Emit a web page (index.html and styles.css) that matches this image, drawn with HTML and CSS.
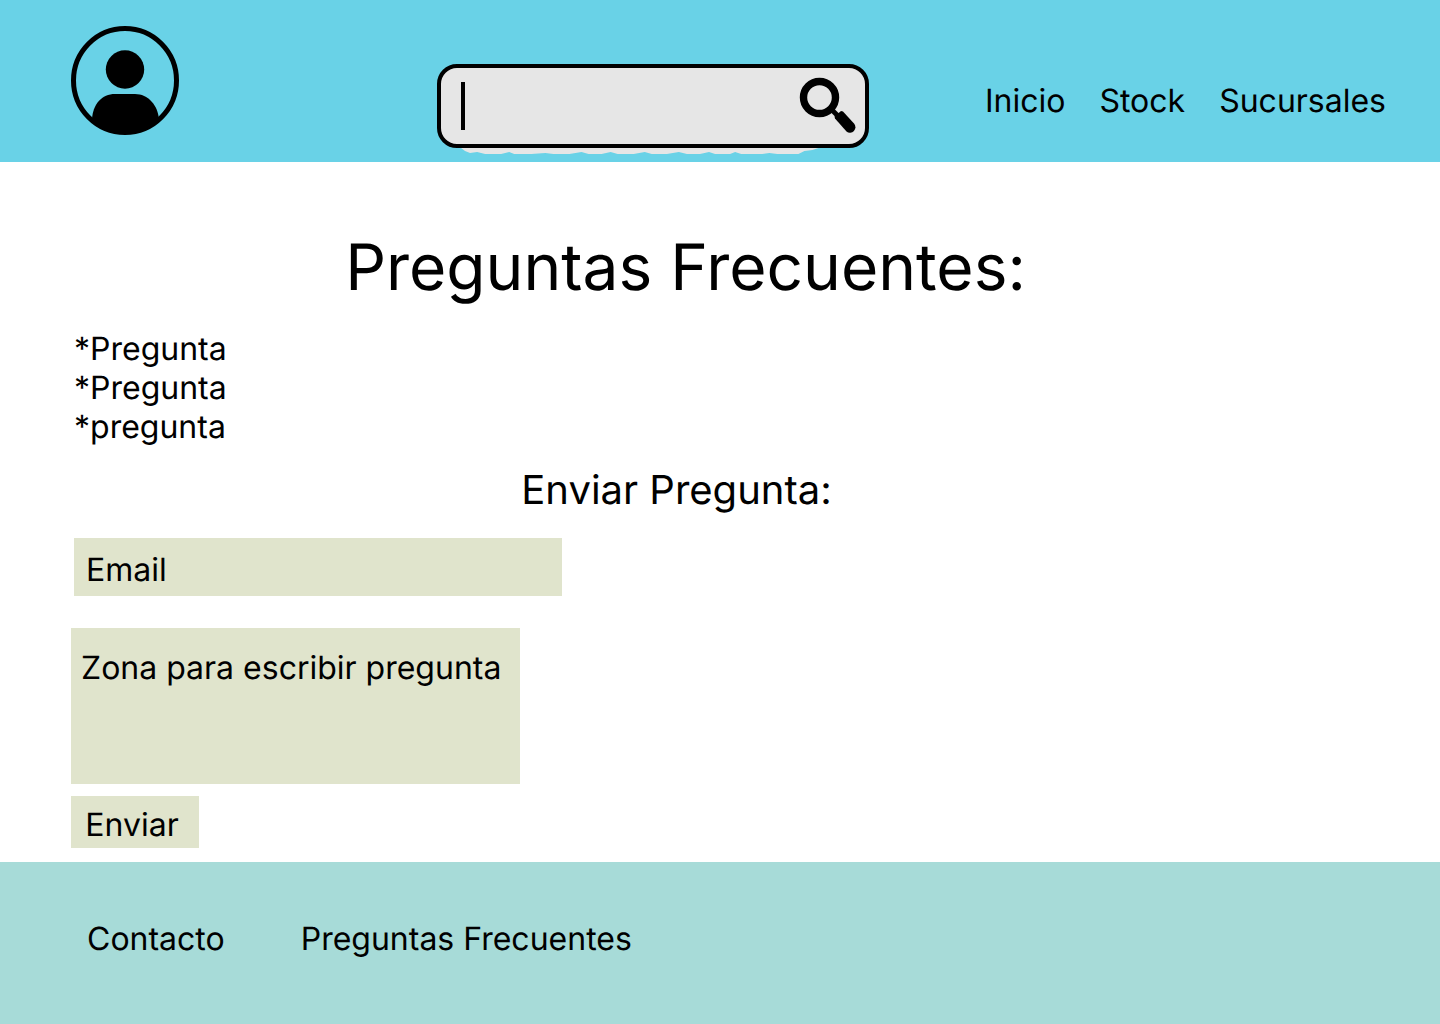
FILE: index.html
```html
<!DOCTYPE html>
<html lang="es">
<head>
  <meta charset="utf-8">
  <meta name="viewport" content="width=device-width, initial-scale=1">
  <title>Preguntas Frecuentes</title>
  <link rel="stylesheet" href="styles.css">
</head>
<body>
  <header class="site-header">
    <a class="profile" href="#" aria-label="Perfil">
      <svg class="profile-icon" viewBox="0 0 108 109" aria-hidden="true">
        <ellipse cx="54" cy="54.5" rx="51.5" ry="52" fill="none" stroke="#000" stroke-width="5"/>
        <circle cx="54" cy="43.500" r="19.200"/>
        <path d="M21 94C21.500 78 31 68 44 68H64C77 68 87 79 88 94A52 52 0 0 1 54 108A52 52 0 0 1 21 94Z"/>
      </svg>
    </a>
    <form class="search" role="search">
      <input class="search-input" type="search" aria-label="Buscar">
      <button class="search-button" type="submit" aria-label="Buscar">
        <svg class="search-icon" viewBox="0 0 58 58" aria-hidden="true">
          <circle cx="20.500" cy="20.500" r="16" fill="none" stroke="#000" stroke-width="7.400"/>
          <path d="M32 32L40 40" stroke="#000" stroke-width="5"/>
          <path d="M36 41.500L35.500 39.500L42 34L44 34.500L55 46.500A5.500 5.500 0 0 1 47.500 54.500Z"/>
        </svg>
      </button>
      <svg class="search-edge" viewBox="0 0 380 8" preserveAspectRatio="none" aria-hidden="true">
        <path fill="#e6e6e6" d="M0 0L4 3L9 5L16 4L24 6L40 6L48 4L53 6L70 6L84 5L92 6L108 6L120 4L127 6L140 6L149 4L156 6L172 6L183 4L190 6L205 6L217 4L225 6L238 6L247 4L253 6L268 6L273 4L279 6L300 6L307 5L315 6L336 6L342 3L350 2L356 0L380 0Z"/>
      </svg>
    </form>
    <nav class="main-nav">
      <a href="#">Inicio</a>
      <a href="#">Stock</a>
      <a href="#">Sucursales</a>
    </nav>
  </header>

  <main class="content">
    <h1 class="title">Preguntas Frecuentes:</h1>
    <ul class="questions">
      <li>*Pregunta</li>
      <li>*Pregunta</li>
      <li>*pregunta</li>
    </ul>
    <h2 class="subtitle">Enviar Pregunta:</h2>
    <form class="question-form">
      <input class="field email" type="email" placeholder="Email" aria-label="Email">
      <textarea class="field message" placeholder="Zona para escribir pregunta" aria-label="Zona para escribir pregunta"></textarea>
      <button class="field send" type="submit">Enviar</button>
    </form>
  </main>

  <footer class="site-footer">
    <a href="#">Contacto</a>
    <a href="#">Preguntas Frecuentes</a>
  </footer>
</body>
</html>
```

FILE: styles.css
```css
* {
  box-sizing: border-box;
}

body {
  margin: 0;
  min-height: 100vh;
  display: flex;
  flex-direction: column;
  background: #fff;
  color: #000;
  font-family: Inter, "Liberation Sans", sans-serif;
  font-size: 32px;
  line-height: 39px;
  text-rendering: geometricPrecision;
}

a {
  color: inherit;
  text-decoration: none;
}

.site-header {
  display: flex;
  align-items: flex-start;
  padding: 26px 54px 14px 71px;
  background: #69d2e7;
}

.profile {
  margin-right: auto;
}

.profile-icon {
  display: block;
  width: 108px;
  height: 109px;
}

.search {
  position: relative;
  flex: 0 1 432px;
  display: flex;
  align-items: center;
  justify-content: space-between;
  min-width: 0;
  height: 84px;
  margin: 38px 116px 0 32px;
  padding: 0 8px 0 20px;
  border: 4px solid #000;
  border-radius: 20px;
  background: #e6e6e6;
}

.search-input {
  flex: 1;
  min-width: 0;
  height: 48px;
  padding: 0 12px;
  border: 0;
  border-left: 4px solid #000;
  border-radius: 0;
  outline: 0;
  background: transparent;
  font: inherit;
  appearance: none;
}

.search-button {
  padding: 0;
  border: 0;
  background: transparent;
}

.search-icon {
  display: block;
  width: 58px;
  height: 58px;
}

.search-edge {
  position: absolute;
  top: 100%;
  left: 20px;
  width: 90%;
  height: 8px;
  margin-top: 4px;
}

.main-nav {
  display: flex;
  gap: 34px;
  padding-top: 55px;
}

.content {
  flex: 1;
  padding: 67px 158px 14px 71px;
}

.title {
  margin: 0 0 23px;
  padding-left: 18px;
  font-size: 64px;
  font-weight: 400;
  line-height: 77px;
  text-align: center;
}

.questions {
  margin: 0 0 20px;
  padding: 0 0 0 3px;
  list-style: none;
}

.subtitle {
  margin: 0 0 24px;
  font-size: 40px;
  font-weight: 400;
  line-height: 48px;
  text-align: center;
}

.question-form {
  display: flex;
  flex-direction: column;
  align-items: flex-start;
}

.field {
  display: block;
  max-width: 100%;
  border: 0;
  border-radius: 0;
  background: #e0e4cc;
  color: inherit;
  font: inherit;
  text-rendering: inherit;
}

.field::placeholder {
  color: inherit;
  opacity: 1;
}

.email {
  width: 488px;
  height: 58px;
  margin: 0 0 32px 3px;
  padding: 4px 12px 0;
}

.message {
  width: 449px;
  height: 156px;
  margin-bottom: 12px;
  padding: 20px 10px;
  resize: none;
}

.send {
  width: 128px;
  height: 52px;
  padding: 5px 6px 0 0;
}

.site-footer {
  display: flex;
  gap: 76px;
  padding: 57px 87px 66px;
  background: #a7dbd8;
}
```
